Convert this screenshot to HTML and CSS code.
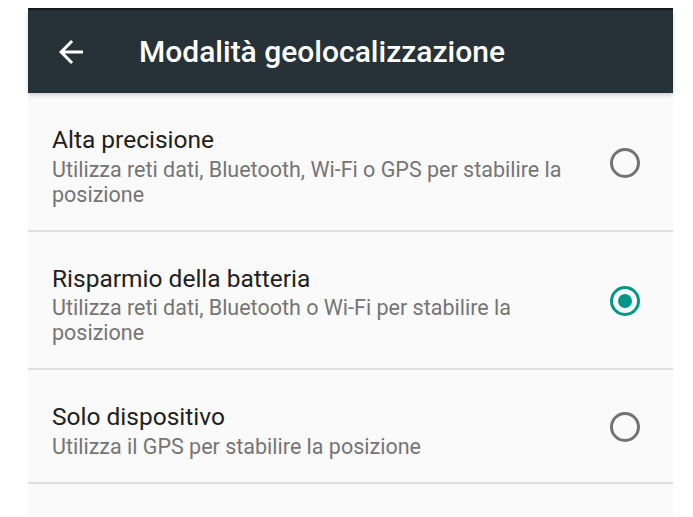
FILE: index.html
```html
<!DOCTYPE html>
<html lang="it">
<head>
    <meta charset="UTF-8">
    <meta name="viewport" content="width=device-width, initial-scale=1.0">
    <title>Modalità geolocalizzazione</title>
    <link rel="stylesheet" href="styles.css">
</head>
<body>
    <div class="screen">
        <div class="statusbar"></div>

        <!-- Toolbar -->
        <div class="toolbar">
            <svg class="back" viewBox="0 0 24 24" width="36" height="36">
                <path d="M20 11H7.83l5.59-5.59L12 4l-8 8 8 8 1.41-1.41L7.83 13H20v-2z" fill="#fff"/>
            </svg>
            <h1 class="title">Modalità geolocalizzazione</h1>
        </div>

        <!-- Location modes -->
        <div class="list">
            <div class="option">
                <div class="text">
                    <div class="label">Alta precisione</div>
                    <div class="summary">Utilizza reti dati, Bluetooth, Wi-Fi o GPS per stabilire la posizione</div>
                </div>
                <span class="radio"></span>
            </div>
            <div class="option">
                <div class="text">
                    <div class="label">Risparmio della batteria</div>
                    <div class="summary">Utilizza reti dati, Bluetooth o Wi-Fi per stabilire la posizione</div>
                </div>
                <span class="radio checked"></span>
            </div>
            <div class="option">
                <div class="text">
                    <div class="label">Solo dispositivo</div>
                    <div class="summary">Utilizza il GPS per stabilire la posizione</div>
                </div>
                <span class="radio"></span>
            </div>
        </div>
    </div>
</body>
</html>
```

FILE: styles.css
```css
body {
    margin: 0;
    background: #fff;
    font-family: Roboto, 'Noto Sans', sans-serif;
}
.screen {
    width: 645px;
    margin: 8px 0 0 28px;
    min-height: calc(100vh - 8px);
    background: #fafafa;
}
.statusbar {
    height: 2px;
    background: #161b1e;
}
.toolbar {
    position: relative;
    height: 83px;
    display: flex;
    align-items: center;
    background: #263238;
    box-shadow: 0 2px 4px rgba(0, 0, 0, 0.18);
}
.back {
    margin-left: 25px;
    flex-shrink: 0;
}
.title {
    margin: 0 0 0 50px;
    font-size: 30px;
    font-weight: 500;
    color: #fff;
}
.option {
    display: flex;
    align-items: center;
    padding: 32px 33px 23px 24px;
    border-bottom: 2px solid #dedede;
}
.text {
    flex: 1;
    margin-right: 15px;
}
.label {
    font-size: 24.5px;
    line-height: 30px;
    color: #212121;
}
.summary {
    margin-top: 1.5px;
    font-size: 21.5px;
    line-height: 25px;
    color: #757575;
}
.radio {
    width: 30px;
    height: 30px;
    margin-bottom: 6px;
    box-sizing: border-box;
    border: 3px solid #737373;
    border-radius: 50%;
    flex-shrink: 0;
    display: flex;
    align-items: center;
    justify-content: center;
}
.radio.checked {
    border-color: #009688;
}
.radio.checked::after {
    content: "";
    width: 14px;
    height: 14px;
    border-radius: 50%;
    background: #009688;
}
```
